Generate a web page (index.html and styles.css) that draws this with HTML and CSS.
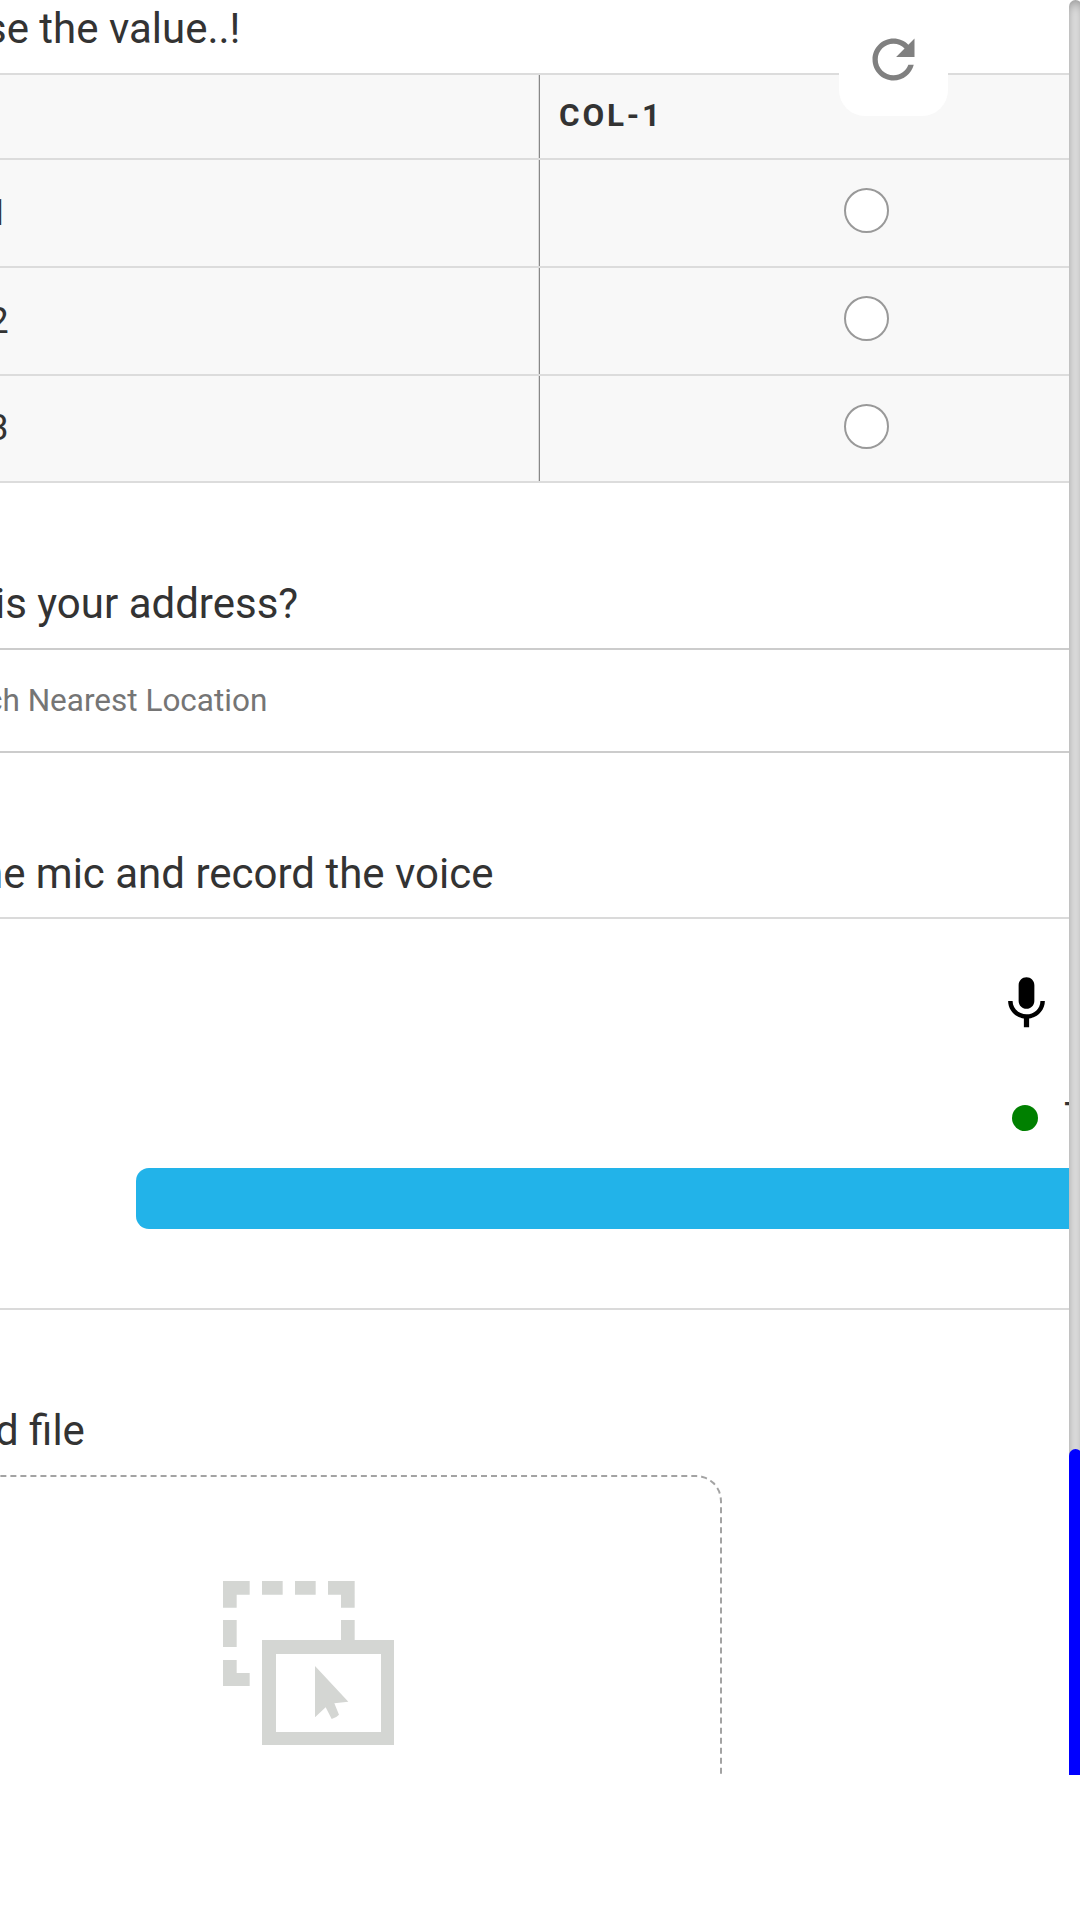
FILE: index.html
```html
<!DOCTYPE html>
<html lang="en">
<head>
<meta charset="utf-8">
<title>Form</title>
<link rel="stylesheet" href="styles.css">
</head>
<body>
<div class="viewport">
  <main class="form">
    <section class="question question-grid">
      <h2 class="title title-value">se the value..!</h2>
      <div class="matrix">
        <div class="row row-head"><div class="cell"></div><div class="cell head">COL-1</div></div>
        <div class="row"><div class="cell label">1</div><div class="cell option"><span class="radio"></span></div></div>
        <div class="row"><div class="cell label">2</div><div class="cell option"><span class="radio"></span></div></div>
        <div class="row row-last"><div class="cell label">3</div><div class="cell option"><span class="radio"></span></div></div>
      </div>
    </section>
    <section class="question question-address">
      <h2 class="title title-address">is your address?</h2>
      <div class="search"><span class="placeholder">ch Nearest Location</span></div>
    </section>
    <section class="question question-voice">
      <h2 class="title title-voice">he mic and record the voice</h2>
      <div class="recorder">
        <svg class="mic" viewBox="0 0 24 24"><path d="M12 14c1.66 0 2.99-1.34 2.99-3L15 5c0-1.66-1.34-3-3-3S9 3.34 9 5v6c0 1.66 1.34 3 3 3zm5.3-3c0 3-2.54 5.1-5.3 5.1S6.7 14 6.7 11H5c0 3.41 2.72 6.23 6 6.72V21h2v-3.28c3.28-.48 6-3.3 6-6.72h-1.7z"/></svg>
        <div class="status"><span class="dot"></span><span class="timer">T</span></div>
        <div class="bar"></div>
      </div>
    </section>
    <section class="question question-file">
      <h2 class="title title-file">d file</h2>
      <div class="dropzone">
        <svg class="drop-icon" viewBox="39 63 513 493">
          <path d="M39 63h80v41H80v39H39zM156 63h62v41h-62zM255 63h62v41h-62zM354 63h80v80h-41v-39h-39zM39 180h41v81H39zM393 180h41v60h-41zM39 300h41v39h39v39H39z"/>
          <path fill-rule="evenodd" d="M156 240h396v316H156zM198 282v234h315V282z"/>
          <path d="M315 318L415 425L373 430L387 464Q378 474 365 477L347 442L315 472z"/>
        </svg>
      </div>
    </section>
    <button class="refresh" aria-label="Refresh">
      <svg viewBox="0 0 24 24"><path d="M17.65 6.35C16.2 4.9 14.21 4 12 4c-4.42 0-7.99 3.58-7.99 8s3.57 8 7.99 8c3.73 0 6.84-2.55 7.73-6h-2.08c-.82 2.33-3.04 4-5.65 4-3.31 0-6-2.69-6-6s2.69-6 6-6c1.66 0 3.14.69 4.22 1.78L13 11h7V4l-2.35 2.35z"/></svg>
    </button>
  </main>
  <div class="scrollbar"><div class="track"><div class="thumb"></div></div></div>
</div>
</body>
</html>
```

FILE: styles.css
```css
* { box-sizing: border-box; }
body { margin: 0; background: #fff; color: #333; font-family: Roboto, sans-serif; }
.viewport { display: flex; width: 1080px; height: 1775px; overflow: hidden; }
.form { position: relative; flex: 1; min-width: 0; overflow: hidden; }
.question { display: flex; flex-direction: column; }
.title { margin: 0; font-size: 42px; line-height: 58px; font-weight: 400; white-space: nowrap; }
.question-grid { height: 483px; }
.title-value { margin-left: -15px; height: 73px; }
.matrix { background: #f8f8f8; border-top: 2px solid #dcdcdc; }
.row { display: flex; height: 108px; border-bottom: 2px solid #dcdcdc; }
.row-head { height: 85px; }
.row-last { height: 107px; }
.cell { width: 538px; }
.cell + .cell { flex: 1; border-left: 1px solid #dcdcdc; box-shadow: inset 1px 0 #888; }
.head { display: flex; align-items: center; padding: 0 0 3px 20px; font-size: 31.5px; font-weight: 700; letter-spacing: 2.8px; }
.label { display: flex; align-items: center; padding-bottom: 2px; font-size: 36.75px; text-indent: -12px; }
.option { display: flex; padding: 28px 0 0 305px; }
.row-last .option { padding-top: 27.5px; }
.radio { width: 45px; height: 45px; border: 2px solid #999; border-radius: 50%; background: #fff; }

.question-address { padding-top: 92px; height: 270px; }
.title-address { height: 73px; margin-left: -5px; }
.search { display: flex; align-items: center; height: 105px; border: solid #ccc; border-width: 2px 0; }
.placeholder { margin-left: -14px; font-size: 31.5px; color: #757575; white-space: nowrap; }

.question-voice { padding-top: 92px; height: 557px; }
.title-voice { height: 72px; margin-left: -20px; }
.recorder { display: flex; flex-direction: column; height: 393px; padding-top: 53px; border: solid #dadada; border-width: 2px 0; }
.mic { width: 63px; height: 63px; margin-left: 995px; fill: #000; }
.status { display: flex; align-items: center; gap: 26px; height: 60px; margin: 52px 0 0 1012px; }
.dot { flex: none; width: 26px; height: 26px; margin-top: 2px; border-radius: 50%; background: green; }
.timer { font-size: 42px; }
.bar { height: 61px; margin: 21px 0 0 136px; border-radius: 13px 0 0 13px; background: #22b3e9; }

.question-file { padding-top: 92px; }
.title-file { height: 73px; margin-left: -5px; }
.dropzone { width: 1018px; height: 500px; margin-left: -296px; padding: 104px 0 0 517px; border: 2px dashed #a3a3a3; border-radius: 26px; }
.drop-icon { display: block; width: 171px; height: 164.33px; fill: #d4d6d3; }

/* Floating action tab pinned over the top of the form */
.refresh { position: absolute; left: 839px; top: 0; display: flex; align-items: flex-start; width: 109px; height: 116px; padding: 28px 0 0 23px; border: 0; border-radius: 0 0 26px 26px; background: #fff; }
.refresh svg { flex: none; width: 63px; height: 63px; fill: #808080; }

.scrollbar { width: 11px; overflow: hidden; }
.track { display: flex; align-items: flex-end; width: 13px; height: 1790px; padding-bottom: 15px; border-radius: 13px; box-shadow: inset 0 0 13px grey; }
.thumb { width: 13px; height: 326px; border-radius: 13px 13px 0 0; background: #00f; }
```
